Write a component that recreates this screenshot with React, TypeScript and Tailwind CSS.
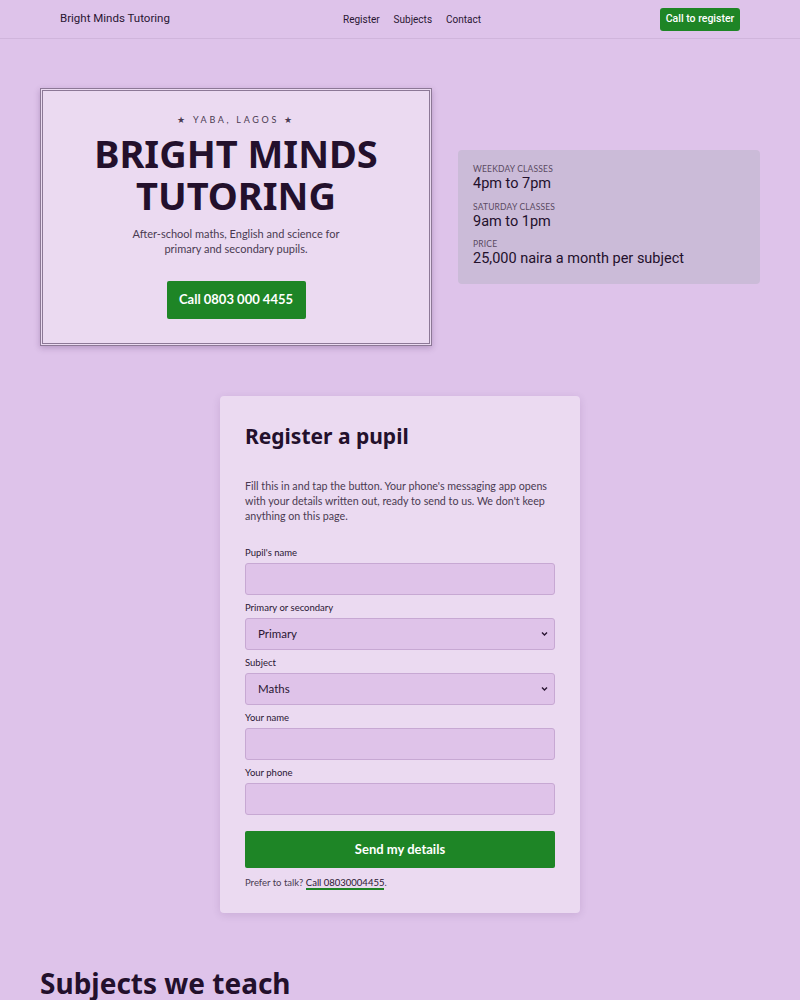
import { useState } from "react";

const heading = "font-['Noto_Sans',sans-serif]";
const narrow = "font-['Roboto',sans-serif]";

const Field = ({ label, children }: { label: string; children: React.ReactNode }) => (
  <div className="flex flex-col">
    <label className="text-[9.5px] text-[#2a1633] mb-[4px] leading-[12px]">{label}</label>
    {children}
  </div>
);

const inputCls =
  "w-full h-[32px] bg-[#dfc3e9] border border-[#c7a8d3] rounded-[3px] px-3 text-[11.5px] text-[#2a1633] outline-none";

const Select = ({ value, options, onChange }: { value: string; options: string[]; onChange: (v: string) => void }) => (
  <div className="relative">
    <select className={`${inputCls} appearance-none`} value={value} onChange={(e) => onChange(e.target.value)}>
      {options.map((o) => (
        <option key={o}>{o}</option>
      ))}
    </select>
    <svg
      className="absolute right-[7px] top-1/2 -translate-y-1/2 pointer-events-none"
      width="7"
      height="5"
      viewBox="0 0 7 5"
      fill="none"
    >
      <path d="M1 1l2.5 2.5L6 1" stroke="#2a1633" strokeWidth="1.4" />
    </svg>
  </div>
);

export default function App() {
  const [form, setForm] = useState({ pupil: "", level: "Primary", subject: "Maths", name: "", phone: "" });

  return (
    <div className="min-h-[1000px] bg-[#dec3ea] text-[#2a1633] font-['Lato',sans-serif]">
      {/* Nav */}
      <header className="h-[39px] border-b border-[#d0b5dc]">
        <div className="max-w-[680px] mx-auto h-full grid grid-cols-3 items-center">
          <span className={`${narrow} text-[11.5px] text-[#2a1633]`}>Bright Minds Tutoring</span>
          <nav className={`${narrow} flex justify-center gap-[14px] text-[10px] ml-[24px]`}>
            <a>Register</a>
            <a>Subjects</a>
            <a>Contact</a>
          </nav>
          <div className="flex justify-end">
            <a className={`${narrow} bg-[#1e8526] text-white text-[10.5px] font-medium w-[80px] h-[23px] flex items-center justify-center rounded-[3px]`}>
              Call to register
            </a>
          </div>
        </div>
      </header>

      {/* Hero */}
      <section className="max-w-[720px] mx-auto pt-[49px] grid grid-cols-[392px_302px] gap-[26px] items-center">
        <div className="bg-[#ebdaf1] border-[3px] border-double border-[#8c7896] shadow-[0_2px_6px_rgba(60,20,80,0.25)] h-[258px] flex flex-col items-center pt-[23px]">
          <div className="text-[9px] leading-[12px] tracking-[0.3em] text-[#4a3a52] flex items-center gap-[5px]">
            <span>★</span>
            <span>YABA, LAGOS</span>
            <span>★</span>
          </div>
          <h1 className={`${heading} font-bold text-[38px] leading-[42px] text-center text-[#23102c] mt-[6px]`}>
            BRIGHT MINDS
            <br />
            TUTORING
          </h1>
          <p className="text-[11px] leading-[15px] text-center text-[#4a3a52] mt-[10px]">
            After-school maths, English and science for
            <br />
            primary and secondary pupils.
          </p>
          <a className="mt-[25px] bg-[#1e8526] text-white text-[13px] font-bold w-[139px] h-[38px] flex items-center justify-center rounded-[2px]">
            Call 0803 000 4455
          </a>
        </div>

        <div className="bg-[#cbbbd8] rounded-[4px] px-[15px] pt-[14px] pb-[17px] flex flex-col gap-[9.5px]">
          <div>
            <div className="text-[8.5px] text-[#5a4a62] uppercase leading-[11px] tracking-[0.02em]">Weekday classes</div>
            <div className={`${narrow} text-[14.5px] leading-[17px] text-[#23102c]`}>4pm to 7pm</div>
          </div>
          <div>
            <div className="text-[8.5px] text-[#5a4a62] uppercase leading-[11px] tracking-[0.02em]">Saturday classes</div>
            <div className={`${narrow} text-[14.5px] leading-[17px] text-[#23102c]`}>9am to 1pm</div>
          </div>
          <div>
            <div className="text-[8.5px] text-[#5a4a62] uppercase leading-[11px] tracking-[0.02em]">Price</div>
            <div className={`${narrow} text-[14.5px] leading-[17px] text-[#23102c]`}>25,000 naira a month per subject</div>
          </div>
        </div>
      </section>

      {/* Register */}
      <section className="mt-[50px] flex justify-center">
        <div className="w-[360px] bg-[#ebdaf1] rounded-[4px] shadow-[0_2px_8px_rgba(60,20,80,0.12)] px-[25px] pt-[26px] pb-[24px]">
          <h2 className={`${heading} font-bold text-[21px] leading-[28px] text-[#23102c]`}>Register a pupil</h2>
          <p className="text-[10.7px] leading-[15px] text-[#4a3a52] mt-[28px]">
            Fill this in and tap the button. Your phone's messaging app opens with your details written out, ready to
            send to us. We don't keep anything on this page.
          </p>

          <form className="mt-[24px] flex flex-col gap-[7px]" onSubmit={(e) => e.preventDefault()}>
            <Field label="Pupil's name">
              <input className={inputCls} value={form.pupil} onChange={(e) => setForm({ ...form, pupil: e.target.value })} />
            </Field>
            <Field label="Primary or secondary">
              <Select value={form.level} options={["Primary", "Secondary"]} onChange={(v) => setForm({ ...form, level: v })} />
            </Field>
            <Field label="Subject">
              <Select
                value={form.subject}
                options={["Maths", "English", "Science"]}
                onChange={(v) => setForm({ ...form, subject: v })}
              />
            </Field>
            <Field label="Your name">
              <input className={inputCls} value={form.name} onChange={(e) => setForm({ ...form, name: e.target.value })} />
            </Field>
            <Field label="Your phone">
              <input className={inputCls} value={form.phone} onChange={(e) => setForm({ ...form, phone: e.target.value })} />
            </Field>

            <button
              type="submit"
              className="mt-[9px] h-[37px] bg-[#1e8526] text-white text-[13px] font-bold rounded-[2px]"
            >
              Send my details
            </button>
          </form>
          <p className="text-[9.5px] leading-[13px] text-[#4a3a52] mt-[8px]">
            Prefer to talk?{" "}
            <a className="text-[#2a1633] border-b-2 border-[#1e8526]">Call 08030004455</a>.
          </p>
        </div>
      </section>

      {/* Subjects */}
      <section className="max-w-[720px] mx-auto mt-[50px]">
        <h2 className={`${heading} font-bold text-[28px] leading-[40px] text-[#23102c]`}>Subjects we teach</h2>
      </section>
    </div>
  );
}
